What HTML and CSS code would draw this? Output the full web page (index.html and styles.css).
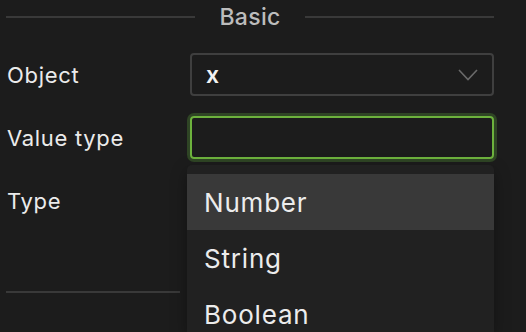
FILE: index.html
```html
<!DOCTYPE html>
<html>
<head>
<meta charset="utf-8">
<link rel="stylesheet" href="styles.css">
</head>
<body>
<div class="panel">
  <div class="section-title">
    <span class="line"></span>
    <span class="title">Basic</span>
    <span class="line"></span>
  </div>
  <div class="form">
    <div class="row">
      <div class="label">Object</div>
      <div class="control select">
        <span class="value">x</span>
        <svg class="chev" width="20" height="12" viewBox="0 0 20 12"><path d="M1 1 L10 10.5 L19 1" fill="none" stroke="#6a6a6a" stroke-width="1.6"/></svg>
      </div>
    </div>
    <div class="row">
      <div class="label">Value type</div>
      <div class="control input focus"></div>
    </div>
    <div class="row">
      <div class="label">Type</div>
      <div class="control blank"></div>
    </div>
  </div>
  <div class="section-bottom">
    <span class="line short"></span>
  </div>
  <div class="dropdown">
    <div class="item active">Number</div>
    <div class="item">String</div>
    <div class="item">Boolean</div>
  </div>
</div>
</body>
</html>
```

FILE: styles.css
```css
html, body {
  margin: 0;
  padding: 0;
  background: #1c1c1c;
  width: 526px;
  height: 332px;
  overflow: hidden;
}
body {
  font-family: Inter, "Noto Sans", "Liberation Sans", sans-serif;
  color: #e6e6e6;
}
.panel {
  position: relative;
  width: 488px;
  height: 332px;
  padding: 0 0 0 6px;
}
.section-title {
  display: flex;
  align-items: center;
  gap: 24px;
  height: 34px;
}
.line {
  flex: 1;
  height: 2px;
  background: #393939;
}
.title {
  font-size: 23px;
  color: #bcbcbc;
  font-weight: 500;
  letter-spacing: 0.3px;
}
.form {
  display: flex;
  flex-direction: column;
  gap: 20px;
  margin-top: 19px;
}
.row {
  display: flex;
  align-items: center;
  height: 43px;
}
.label {
  width: 183px;
  font-size: 22px;
  letter-spacing: 0.7px;
  padding-left: 1px;
  color: #ebebeb;
}
.control {
  width: 304px;
  height: 43px;
  box-sizing: border-box;
  border-radius: 4px;
}
.select {
  border: 2px solid #3f3f3f;
  display: flex;
  align-items: center;
  justify-content: space-between;
  padding: 0 14px 0 14px;
}
.value {
  font-size: 23px;
  font-weight: 600;
  color: #f2f2f2;
}
.input.focus {
  border: 2px solid #6db23d;
  box-shadow: 0 0 0 3px #2f4525;
}
.section-bottom {
  margin-top: 69px;
}
.line.short {
  display: block;
  width: 174px;
  flex: none;
}
.dropdown {
  position: absolute;
  left: 187px;
  top: 165px;
  width: 307px;
  height: 167px;
  overflow: hidden;
  background: #212121;
  border-radius: 5px 5px 0 0;
  padding-top: 9px;
  box-sizing: border-box;
  box-shadow: 0 6px 16px rgba(0,0,0,0.35);
}
.item {
  height: 56px;
  display: flex;
  align-items: center;
  padding-left: 17px;
  font-size: 26px;
  letter-spacing: 0.8px;
  color: #ececec;
}
.item.active {
  background: #393939;
}
```
